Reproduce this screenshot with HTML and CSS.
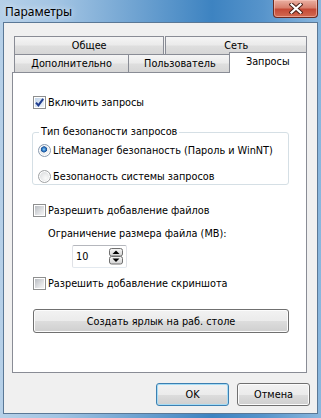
FILE: index.html
```html
<!DOCTYPE html>
<html lang="ru">
<head>
    <meta charset="UTF-8">
    <title>Параметры</title>
    <link rel="stylesheet" href="styles.css">
</head>
<body>
<div class="window">
    <div class="titlebar">
        <span class="title">Параметры</span>
        <button class="close" title="Закрыть">
            <svg width="14" height="11" viewBox="0 0 14 11">
                <path d="M2.5 1.5 L11.5 9.5 M11.5 1.5 L2.5 9.5" stroke="#4a2018" stroke-width="4.2" stroke-linecap="square"/>
                <path d="M2.5 1.5 L11.5 9.5 M11.5 1.5 L2.5 9.5" stroke="#fff" stroke-width="2.2" stroke-linecap="square"/>
            </svg>
        </button>
    </div>

    <div class="client">
        <div class="tabs">
            <div class="tab-row">
                <div class="tab tab-general">Общее</div>
                <div class="tab tab-net">Сеть</div>
            </div>
            <div class="tab-row">
                <div class="tab tab-extra">Дополнительно</div>
                <div class="tab tab-user">Пользователь</div>
                <div class="tab tab-requests active">Запросы</div>
            </div>
        </div>

        <div class="page">
            <label class="option opt-enable">
                <span class="check on"><i><svg width="9" height="9" viewBox="0 0 9 9"><path d="M1 4.6 L3.4 7.4 L8.2 0.8" fill="none" stroke="#1f3d8f" stroke-width="2"/></svg></i></span>
                Включить запросы
            </label>

            <div class="group">
                <div class="group-title">Тип безопаности запросов</div>
                <label class="option radio-row first"><span class="radio on"></span>LiteManager безопаность (Пароль и WinNT)</label>
                <label class="option radio-row"><span class="radio"></span>Безопаность системы запросов</label>
            </div>

            <label class="option opt-files"><span class="check"><i></i></span>Разрешить добавление файлов</label>

            <div class="size-label">Ограничение размера файла (MB):</div>
            <div class="spin">
                <span>10</span>
                <svg width="14" height="17" viewBox="0 0 14 17">
                    <defs>
                        <linearGradient id="sg" x1="0" y1="0" x2="0" y2="1">
                            <stop offset="0" stop-color="#f6f6f6"/>
                            <stop offset="1" stop-color="#d4d4d4"/>
                        </linearGradient>
                    </defs>
                    <rect x="0.5" y="0.5" width="13" height="7.5" rx="2" fill="url(#sg)" stroke="#6f6f6f"/>
                    <rect x="0.5" y="8.5" width="13" height="7.5" rx="2" fill="url(#sg)" stroke="#6f6f6f"/>
                    <path d="M3.5 6 L7 2.5 L10.5 6Z" fill="#000"/>
                    <path d="M3.5 10.5 L7 14 L10.5 10.5Z" fill="#000"/>
                </svg>
            </div>

            <label class="option opt-shot"><span class="check"><i></i></span>Разрешить добавление скриншота</label>

            <button class="btn btn-shortcut">Создать ярлык на раб. столе</button>
        </div>

        <div class="footer">
            <button class="btn btn-default">OK</button>
            <button class="btn">Отмена</button>
        </div>
    </div>
</div>
</body>
</html>
```

FILE: styles.css
```css
* {
    box-sizing: border-box;
}
body {
    margin: 0;
    font-family: "DejaVu Sans Condensed", "DejaVu Sans", sans-serif;
    font-size: 10.8px;
    color: #000;
}
.window {
    width: 321px;
    height: 418px;
    display: flex;
    flex-direction: column;
    padding: 0 3px 4px 3px;
    background: linear-gradient(90deg, #b6d0e8 0%, #a2c4e3 18%, #74a6d3 40%, #3d83c1 66%, #5794cb 82%, #8ab7de 100%);
}
.titlebar {
    height: 22px;
    display: flex;
    align-items: flex-start;
}
.title {
    font-family: "Noto Sans", sans-serif;
    font-size: 12px;
    line-height: 16px;
    margin: 4px 0 0 2px;
    text-shadow: 0 0 6px rgba(255,255,255,0.9);
}
.close {
    margin-left: auto;
    width: 45px;
    height: 18px;
    padding: 0;
    border: 1px solid #6b2b22;
    border-top: none;
    border-radius: 0 0 4px 4px;
    background: linear-gradient(#eab0a2, #d8806e 45%, #c54a36 55%, #d26a52);
    box-shadow: inset 0 0 0 1px rgba(255,210,200,0.5);
    display: flex;
    align-items: center;
    justify-content: center;
}
.client {
    flex: 1;
    background: #f0f0f0;
    border: 1px solid #5a7896;
    padding: 13px 7px 7px 8px;
    display: flex;
    flex-direction: column;
}

/* вкладки */
.tabs {
    margin-left: 2px;
    width: 293px;
}
.tab-row {
    height: 18px;
    display: flex;
    align-items: flex-start;
}
.tab {
    height: 18px;
    line-height: 17px;
    text-align: center;
    border: 1px solid #898c95;
    border-bottom: none;
    background: linear-gradient(#f5f5f5, #ebebeb 45%, #dedede 55%, #d6d6d6);
}
.tab-general { width: 151px; }
.tab-net { width: 142px; margin-left: 1px; }
.tab-extra { width: 116px; }
.tab-user { width: 104px; margin-left: -1px; }
.tab.active {
    width: 79px;
    height: 21px;
    margin-top: -2px;
    margin-left: -3px;
    background: #fff;
    position: relative;
    z-index: 1;
}

/* страница */
.page {
    width: 295px;
    height: 301px;
    background: #fff;
    border: 1px solid #898c95;
    display: flex;
    flex-direction: column;
    align-items: flex-start;
}
.option {
    height: 13px;
    line-height: 13px;
    display: flex;
    align-items: center;
    gap: 2px;
    white-space: nowrap;
}
.opt-enable { margin: 23px 0 0 20px; }
.opt-files { margin: 19px 0 0 20px; }
.opt-shot { margin: 9px 0 0 20px; }

.check {
    width: 13px;
    height: 13px;
    flex: none;
    border: 1px solid #8e8f8f;
    background: #fff;
    padding: 1px;
}
.check i {
    display: block;
    width: 9px;
    height: 9px;
    background: linear-gradient(135deg, #b9bdc2, #e6e7e9 70%, #f4f4f4);
}
.check.on i {
    background: linear-gradient(135deg, #c4d6ea, #eef3f9);
}
.check svg {
    display: block;
}

.group {
    margin: 23px 0 0 19px;
    width: 257px;
    border: 1px solid #d5dfe5;
    border-radius: 3px;
    padding: 0 0 1px 5px;
    display: flex;
    flex-direction: column;
    align-items: flex-start;
}
.group-title {
    line-height: 14px;
    margin: -8px 0 0 1px;
    padding: 0 2px;
    background: #fff;
}
.radio-row { margin-top: 13px; }
.radio-row.first { margin-top: 5px; }
.radio {
    width: 13px;
    height: 13px;
    flex: none;
    border-radius: 50%;
    border: 1px solid #a0a2a4;
    background: radial-gradient(circle at 60% 65%, #fafafa, #d8dadc 85%);
    box-shadow: inset 0 0 0 1px #fff;
}
.radio.on {
    border-color: #8a9bb0;
    background: radial-gradient(circle at 45% 40%, #9bd6f5 0, #3c8ad2 1.4px, #1d5299 2.8px, rgba(29,82,153,0) 3.4px),
                radial-gradient(circle at 60% 65%, #fafafa, #d8dadc 85%);
}

.size-label {
    line-height: 14px;
    margin: 10px 0 0 35px;
}
.spin {
    margin: 4px 0 0 59px;
    width: 55px;
    height: 23px;
    border: 1px solid;
    border-color: #b5b7bd #dfe1e6 #e3e9ef #dfe1e6;
    border-radius: 2px;
    padding: 0 3px;
    display: flex;
    align-items: center;
    justify-content: space-between;
}
.spin svg {
    display: block;
}

.btn {
    height: 23px;
    padding: 0;
    font: inherit;
    color: #000;
    border: 1px solid #707070;
    border-radius: 3px;
    background: linear-gradient(#f2f2f2, #ebebeb 50%, #dddddd 50%, #cfcfcf);
    box-shadow: inset 0 0 0 1px #fcfcfc;
}
.btn-shortcut {
    margin: 19px 0 0 20px;
    width: 256px;
    height: 24px;
}
.footer {
    margin-top: 10px;
    display: flex;
    justify-content: flex-end;
    gap: 8px;
}
.footer .btn {
    width: 73px;
}
.btn-default {
    border-color: #3c7fb1;
    box-shadow: inset 0 0 0 1px #a6dcf5;
}
```
